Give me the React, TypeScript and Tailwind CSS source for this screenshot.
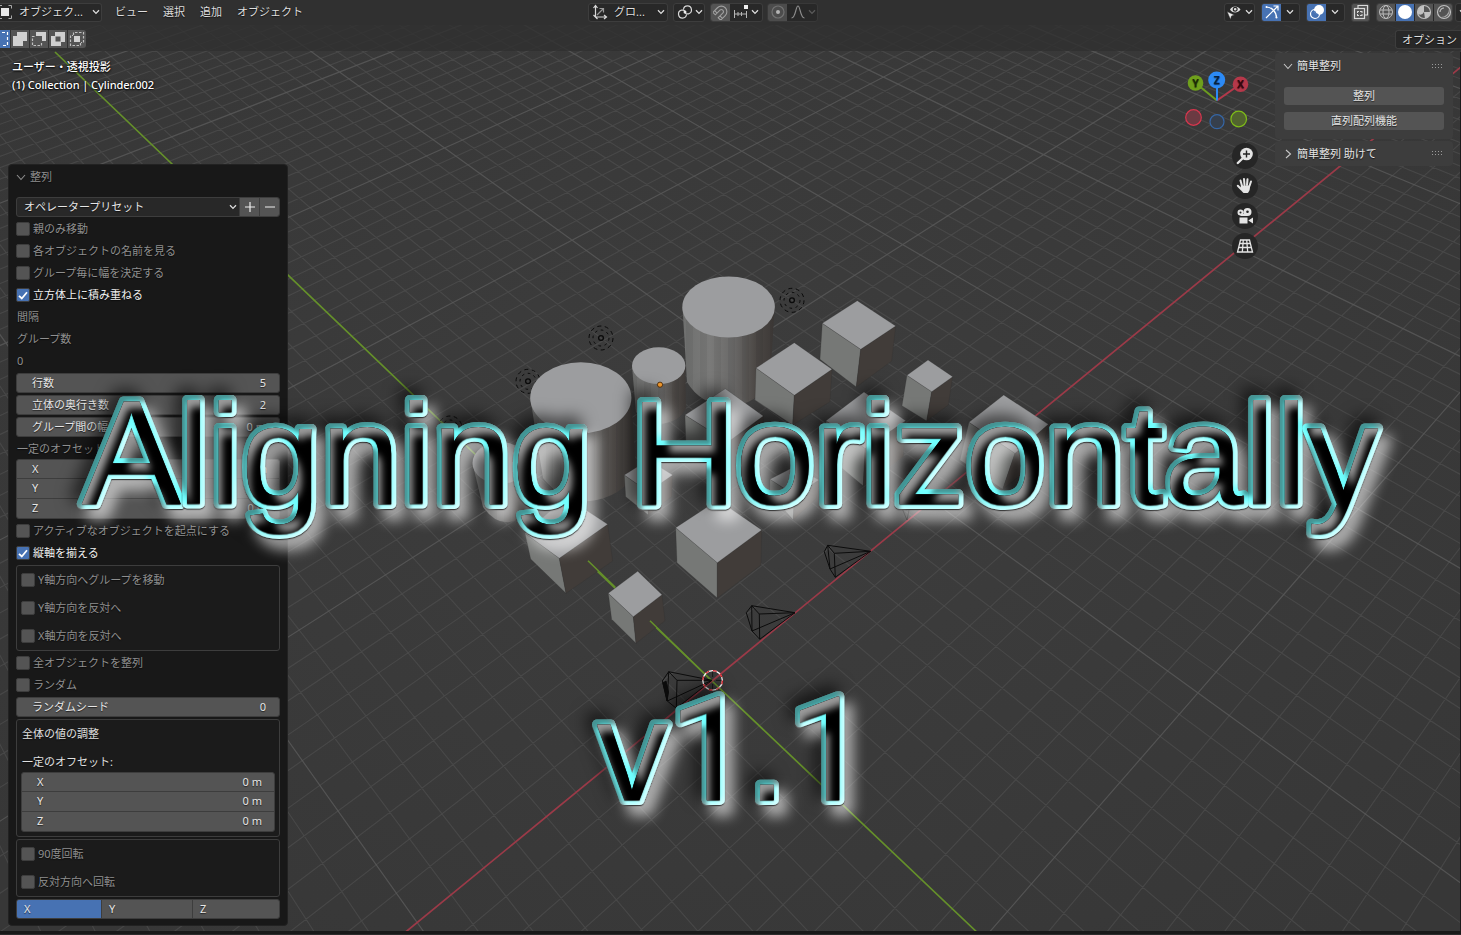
import type { ReactNode } from "react";

/* ---------- viewport projection ---------- */
const project = (x: number, y: number): [number, number] => {
  const w = 1 + 0.0145 * x + 0.0157 * y;
  return [(712 + 35.525 * x - 11.634 * y) / w, (681 - 10.782 * x - 11.139 * y) / w];
};

const seg = (a: [number, number], b: [number, number]) =>
  `M${a[0].toFixed(1)} ${a[1].toFixed(1)}L${b[0].toFixed(1)} ${b[1].toFixed(1)}`;

const alongY = (i: number) => {
  const k = (w: number) => (w - 1 - 0.0145 * i) / 0.0157;
  return seg(project(i, k(0.7)), project(i, k(2.3)));
};
const alongX = (j: number) => {
  const k = (w: number) => (w - 1 - 0.0157 * j) / 0.0145;
  return seg(project(k(0.7), j), project(k(2.3), j));
};

let minor = "";
let major = "";
for (let i = -80; i <= 140; i++) {
  if (i === 0) continue;
  if (i % 10 === 0) major += alongY(i) + alongX(i);
  else minor += alongY(i) + alongX(i);
}

const TOP = "#9c9d9f";
const LEFT = "#767876";
const RIGHT = "#413c39";

/* top, right, front, left, then lower left, lower front, lower right */
const cubes: number[][] = [
  [857.3, 300.7, 895.7, 326, 860.7, 349.3, 822.3, 323.3, 820, 359.3, 856.3, 387, 891.7, 361],
  [928, 360, 952.7, 376.7, 931.7, 391.7, 907, 375.3, 902, 405.7, 926.7, 421, 948.3, 405],
  [794.3, 342.7, 832, 369.3, 794.3, 395.3, 756, 368, 755, 400, 792.7, 425, 830, 401.7],
  [1003.7, 395, 1048.3, 424.3, 1015, 453.3, 969, 422.3, 960, 460, 1002.7, 489.3, 1040, 460],
  [864, 392, 905.7, 420.7, 865, 448.3, 826, 420.7, 828.3, 456.7, 863.3, 486, 903.3, 456.7],
  [725.3, 388.7, 763.3, 416, 728, 442, 685, 415, 686, 448, 728, 480, 762, 450],
  [794.3, 466.7, 819, 480, 794.3, 495, 770, 479.3, 770, 493.3, 793.3, 520, 816.7, 498.3],
  [648.3, 460, 672.7, 475, 648.3, 491.7, 624.3, 475, 625.7, 496.7, 648.3, 515, 671.7, 496.7],
  [718, 500, 761.7, 530, 717.3, 562.7, 675.7, 527.7, 677, 562.7, 717.3, 598, 761, 565],
  [566, 497, 607.7, 524.3, 559.3, 558.3, 525, 533.3, 530.7, 559, 566, 593.3, 612.7, 561],
  [637.7, 571.3, 662, 594.7, 633.3, 616.7, 608.3, 593.3, 611.7, 619.3, 636, 643.3, 665, 620.7],
];

const pts = (c: number[], idx: number[]) => idx.map((i) => `${c[i * 2]},${c[i * 2 + 1]}`).join(" ");

function Cube({ c }: { c: number[] }) {
  return (
    <g stroke="#2c2c2c" strokeOpacity=".35" strokeWidth=".6">
      <polygon points={pts(c, [3, 2, 5, 4])} fill={LEFT} />
      <polygon points={pts(c, [2, 1, 6, 5])} fill={RIGHT} />
      <polygon points={pts(c, [0, 1, 2, 3])} fill={TOP} />
    </g>
  );
}

function PointLight({ x, y }: { x: number; y: number }) {
  return (
    <g fill="none" stroke="#0a0a0a">
      <circle cx={x} cy={y} r="2.4" strokeWidth="1.3" />
      <circle cx={x} cy={y} r="8" strokeWidth="1" strokeDasharray="2.6 3.6" />
      <circle cx={x} cy={y} r="12" strokeWidth="1" strokeDasharray="4 3.5" />
    </g>
  );
}

function Scene() {
  return (
    <svg className="absolute inset-0" width="1461" height="935" viewBox="0 0 1461 935">
      <defs>
        <radialGradient id="bg" cx="50%" cy="50%" r="65%">
          <stop offset="0" stopColor="#3d3d3d" />
          <stop offset="1" stopColor="#373737" />
        </radialGradient>
        <linearGradient id="cyl">
          <stop offset="0" stopColor="#6f706f" />
          <stop offset=".3" stopColor="#7a7a79" />
          <stop offset=".55" stopColor="#6a6968" />
          <stop offset=".8" stopColor="#4b4744" />
          <stop offset="1" stopColor="#3d3937" />
        </linearGradient>
        <pattern id="facet" width="14" height="10" patternUnits="userSpaceOnUse">
          <rect width="7" height="10" fill="#000" fillOpacity=".05" />
        </pattern>
      </defs>
      <rect width="1461" height="935" fill="url(#bg)" />
      <path d={minor} stroke="#505050" strokeOpacity=".62" strokeWidth="1.15" fill="none" />
      <path d={major} stroke="#5a5a5a" strokeOpacity=".8" strokeWidth="1.2" fill="none" />
      <path d="M55 52L712 681L980 935" stroke="#65902a" strokeWidth="1.7" fill="none" />
      <path d="M402 935L712 681L1461 67" stroke="#9b3a48" strokeWidth="1.7" fill="none" />

      <PointLight x={792} y={300.3} />
      <PointLight x={601} y={338} />
      <PointLight x={528} y={381.3} />
      <PointLight x={450} y={428} />

      {[
        "M682.5 307L687 382Q700 404 728 407Q758 404 770 382L774.7 307Z",
        "M632 366L636 412Q645 424 660 424Q680 422 686 408L685.3 366Z",
        "M530.3 398L543 478Q560 501 590 501Q622 497 636 472L631.3 398Z",
        "M472.7 464L483 507Q495 524 510 522Q528 518 531 500L527 464Z",
      ].map((d) => (
        <g key={d}>
          <path d={d} fill="url(#cyl)" />
          <path d={d} fill="url(#facet)" />
        </g>
      ))}
      <g fill={TOP}>
        <ellipse cx="728.6" cy="307" rx="46.3" ry="30.6" />
        <ellipse cx="658.7" cy="365.7" rx="26.7" ry="18.4" />
        <ellipse cx="580.8" cy="397.7" rx="50.6" ry="35.4" />
        <ellipse cx="500" cy="463" rx="27.5" ry="21" />
      </g>
      {cubes.map((c) => (
        <Cube key={c[0]} c={c} />
      ))}
      <path d="M588 560.7L615.3 587.3M650 620.7L712 681" stroke="#65902a" strokeWidth="1.6" />

      <g fill="none" stroke="#0c0c0c" strokeWidth="1" strokeLinejoin="round">
        <path d="M827.7 545.3L870.7 551.3L834.3 553.3ZM834.3 553.3L835.3 577.3L870.7 551.3L830 569L827.7 545.3M830 569L835.3 577.3M827.7 545.3L824.3 551.7L830 569" />
        <path d="M751.7 605.7L795 612.7L759.3 614ZM759.3 614L759.7 639.3L795 612.7L752 631L751.7 605.7M752 631L759.7 639.3M751.7 605.7L746.3 612.7L752 631" />
        <path d="M668.7 671.7L712 680.3L677 680.3ZM677 680.3L676.3 708.3L712 680.3L667.3 701L668.7 671.7M667.3 701L676.3 708.3" />
        <path d="M668.7 671.7L662.3 681L667.3 701" />
        <path d="M663 683L666 681L668.5 692L667 701Z" fill="#0c0c0c" />
        <path d="M902 508L904 513L907 520L909 510" strokeWidth=".7" />
      </g>

      <circle cx="660" cy="384.7" r="2.6" fill="#f29a2e" stroke="#3a1d04" strokeWidth=".8" />
      <path d="M712.6 671V677M712.6 684V690M703 680.4H709M716 680.4H722" stroke="#111" strokeWidth="1" opacity=".8" />
      <circle cx="712.6" cy="680.4" r="9.8" fill="none" stroke="#fff" strokeWidth="1.3" />
      <circle cx="712.6" cy="680.4" r="9.8" fill="none" stroke="#e0202a" strokeWidth="1.3" strokeDasharray="3.85 3.85" />
      <path d="M1460.500 52V935" stroke="#1c1c1c" strokeWidth="1" />
    </svg>
  );
}

function TitleCard() {
  return (
    <svg className="pointer-events-none absolute inset-0" width="1461" height="935" viewBox="0 0 1461 935">
      <defs>
        <filter
          id="bevel"
          filterUnits="userSpaceOnUse"
          x="0"
          y="340"
          width="1461"
          height="540"
          colorInterpolationFilters="sRGB"
        >
          <feColorMatrix in="SourceGraphic" result="face" values="0 0 0 0 0  0 0 0 0 0  0 0 0 0 0  0 0 -1 1 0" />
          <feFlood floodColor="#000" floodOpacity=".62" result="k" />
          <feFlood floodColor="#fff" floodOpacity=".58" result="w" />
          <feFlood floodColor="#000" floodOpacity=".42" result="k2" />
          <feFlood floodColor="#fff" floodOpacity=".75" result="w2" />
          <feFlood floodColor="#fff" floodOpacity=".6" result="w3" />

          <feOffset in="SourceAlpha" dx="-6" dy="-7" />
          <feGaussianBlur stdDeviation="8" result="b1" />
          <feComposite in="k" in2="b1" operator="in" result="shade" />

          <feOffset in="SourceAlpha" dx="9" dy="11" />
          <feGaussianBlur stdDeviation="6.5" result="b2" />
          <feComposite in="w" in2="b2" operator="in" result="glow" />

          <feOffset in="SourceAlpha" dx="4.5" dy="4.5" />
          <feGaussianBlur stdDeviation="2" result="b3" />
          <feComposite in="SourceAlpha" in2="b3" operator="out" result="m3" />
          <feComposite in="k2" in2="m3" operator="in" result="rimDark" />

          <feOffset in="SourceAlpha" dx="-4" dy="-4" />
          <feGaussianBlur stdDeviation="3.5" result="b4" />
          <feComposite in="SourceAlpha" in2="b4" operator="out" result="m4" />
          <feComposite in="w2" in2="m4" operator="in" result="rimLight" />

          <feOffset in="SourceAlpha" dx="8" dy="12" />
          <feGaussianBlur stdDeviation="3.5" result="b5" />
          <feComposite in="face" in2="b5" operator="out" result="m5" />
          <feComposite in="w3" in2="m5" operator="in" result="sheen" />

          <feMerge>
            <feMergeNode in="shade" />
            <feMergeNode in="glow" />
            <feMergeNode in="SourceGraphic" />
            <feMergeNode in="rimLight" />
            <feMergeNode in="rimDark" />
            <feMergeNode in="face" />
            <feMergeNode in="sheen" />
          </feMerge>
        </filter>
      </defs>
      <g
        filter="url(#bevel)"
        fill="#000"
        stroke="#70ffff"
        strokeWidth="10"
        strokeLinejoin="round"
        paintOrder="stroke"
        fontFamily="'Liberation Sans', Arial, sans-serif"
        fontSize="143.4"
      >
        <text y="503.700">
          <tspan x="81.500" fontSize="149.300">A</tspan>
          <tspan x="177.500" letterSpacing="-.1">ligning </tspan>
          <tspan x="630" fontSize="149.300">H</tspan>
          <tspan x="735" letterSpacing="-.2">orizontally</tspan>
        </text>
        <text y="799.500">
          <tspan x="596.500">v</tspan>
          <tspan x="668.500" fontFamily="Roboto, sans-serif" fontSize="144">1</tspan>
          <tspan x="747">.</tspan>
          <tspan x="788" fontFamily="Roboto, sans-serif" fontSize="144">1</tspan>
        </text>
      </g>
    </svg>
  );
}

/* ---------- small controls ---------- */
function Chevron({ className = "", dim = false }: { className?: string; dim?: boolean }) {
  return (
    <svg className={`shrink-0 ${className}`} width="8" height="6" viewBox="0 0 8 6" fill="none" stroke={dim ? "#5a5a5a" : "#dcdcdc"} strokeWidth="1.3">
      <path d="M1 1.2L4 4.4L7 1.2" />
    </svg>
  );
}

function Box({ className = "", children }: { className?: string; children?: ReactNode }) {
  return (
    <div className={`flex h-[19px] shrink-0 items-center overflow-hidden rounded-[3px] border border-[#3d3d3d] bg-[#282828] ${className}`}>
      {children}
    </div>
  );
}

function Icon({ w = 16, h = 16, className = "", children }: { w?: number; h?: number; className?: string; children: ReactNode }) {
  return (
    <svg className={`shrink-0 ${className}`} width={w} height={h} viewBox={`0 0 ${w} ${h}`} fill="none" stroke="#d8d8d8" strokeWidth="1.2">
      {children}
    </svg>
  );
}

function Header() {
  return (
    <div className="flex h-[25px] items-center bg-[#303030] pb-px">
      <Box className="w-[102px] rounded-l-none border-l-0">
        <Icon w={12}>
          <rect x="1" y="4" width="8" height="8" fill="#e8e8e8" stroke="none" />
          <path d="M8.5 1.5H11.5V4.5M11.5 11.5V14.5H8.5M0 1.5H2M0 14.5H2" stroke="#aaa" strokeWidth="1" />
        </Icon>
        <span className="ml-[7px] w-[70px] shrink-0">オブジェク...</span>
        <Chevron className="ml-[3px]" />
      </Box>
      <span className="ml-[13px] w-[48px] shrink-0">ビュー</span>
      <span className="w-[37px] shrink-0">選択</span>
      <span className="w-[37px] shrink-0">追加</span>
      <span className="w-[70px] shrink-0">オブジェクト</span>

      <Box className="ml-[281px] w-[80px]">
        <Icon className="ml-[3px]">
          <path d="M3.5 2V13H14M1.5 4L3.5 1.5L5.5 4M12 11L14.5 13L12 15M1.5 11L5.5 15" />
          <path d="M5 11L11 5M7.5 4.5H11.5V8.5" stroke="#999" />
        </Icon>
        <span className="ml-[6px] w-[40px] shrink-0">グロ...</span>
        <Chevron className="ml-[3px]" />
      </Box>
      <Box className="ml-[5px] w-[32px]">
        <Icon className="ml-[3px]">
          <path d="M6.500 5.500A4 4 0 1 1 11.500 9.800Q9 10.500 7.500 8.500M9.500 10.500A4 4 0 1 1 4.500 6.200Q7 5.500 8.500 7.500" />
          <circle cx="8" cy="8" r="1.5" fill="#eee" stroke="none" />
        </Icon>
        <Chevron className="ml-[2px]" />
      </Box>
      <Box className="ml-[5px] w-[53px]">
        <div className="flex h-full w-[19px] shrink-0 items-center justify-center bg-[#545454]">
          <Icon>
            <g transform="rotate(45 8 8)" stroke="#a0a0a0" strokeWidth="1.1">
              <path d="M2.5 14V7.5A5.5 5.5 0 0 1 13.500 7.5V14H10V7.5A2 2 0 0 0 6 7.500V14ZM2.500 11.5H6M10 11.500H13.500" />
            </g>
          </Icon>
        </div>
        <Icon className="ml-[3px]">
          <path d="M1.500 6V14M1 10H14M5 8V12M8.500 8V12M13.500 7V14" stroke="#b5b5b5" strokeWidth="1" />
          <rect x="11" y="1" width="4" height="4" fill="#eee" stroke="none" />
        </Icon>
        <Chevron className="ml-[2px]" />
      </Box>
      <Box className="ml-[4px] w-[51px] border-[#383838] bg-[#2c2c2c]">
        <div className="flex h-full w-[19px] shrink-0 items-center justify-center bg-[#4c4c4c]">
          <Icon>
            <circle cx="8" cy="8" r="6" stroke="#727272" />
            <circle cx="8" cy="8" r="2" fill="#b5b5b5" stroke="none" />
          </Icon>
        </div>
        <Icon className="ml-[3px]">
          <path d="M1.500 14C6 14 5.500 2 8 2S10 14 14.500 14" stroke="#8c8c8c" />
        </Icon>
        <Chevron className="ml-[2px]" dim />
      </Box>

      <Box className="ml-[406px] w-[31px]">
        <Icon className="ml-px">
          <path d="M4 5.500C6 1.500 12 1.500 14.500 5.500C12 9.500 6 9.500 4 5.500Z" fill="#ddd" stroke="none" />
          <circle cx="9.200" cy="5.300" r="1.900" fill="#ddd" stroke="#282828" />
          <path d="M1 7.500L8.500 11L5.500 12L4.500 15.500Z" fill="#eee" stroke="#282828" strokeWidth=".5" />
        </Icon>
        <Chevron className="ml-[3px]" />
      </Box>
      <Box className="ml-[6px] w-[39px]">
        <div className="flex h-full w-[19px] shrink-0 items-center justify-center bg-[#4772b3]">
          <Icon>
            <path d="M2 3C8 3 12.500 8 12.500 14M2 14L13.500 2.500M9.500 2H14V6.500" stroke="#fff" />
            <circle cx="2.500" cy="3" r="1" fill="#fff" stroke="none" />
            <circle cx="12.500" cy="13.500" r="1" fill="#fff" stroke="none" />
          </Icon>
        </div>
        <Chevron className="ml-[5px]" />
      </Box>
      <Box className="ml-[6px] w-[39px]">
        <div className="flex h-full w-[19px] shrink-0 items-center justify-center bg-[#4772b3]">
          <Icon>
            <circle cx="10" cy="6" r="5" fill="#fff" stroke="none" />
            <circle cx="6" cy="10" r="4.500" stroke="#fff" />
            <path d="M5.500 7A5 5 0 0 0 9.500 10.800" stroke="#4772b3" />
          </Icon>
        </div>
        <Chevron className="ml-[5px]" />
      </Box>
      <Box className="ml-[6px] w-[19px] justify-center bg-[#545454]">
        <Icon>
          <path d="M5 4V1.500H14.500V11H12" />
          <rect x="1.500" y="4.500" width="10" height="10" />
          <path d="M4 7.500H9M4 11.500H9M4.500 7V12M9 7V12" strokeDasharray="2 1" strokeWidth="1" />
        </Icon>
      </Box>
      <Box className="ml-[6px] w-[77px] gap-px bg-[#3d3d3d]">
        <div className="flex h-full w-[18px] shrink-0 items-center justify-center bg-[#545454]">
          <Icon>
            <circle cx="8" cy="8" r="6.500" stroke="#bdbdbd" strokeWidth="1" />
            <ellipse cx="8" cy="8" rx="3" ry="6.500" stroke="#bdbdbd" strokeWidth="1" />
            <path d="M2 6H14M2 10H14" stroke="#bdbdbd" strokeWidth="1" />
          </Icon>
        </div>
        <div className="flex h-full w-[18px] shrink-0 items-center justify-center bg-[#4772b3]">
          <Icon>
            <circle cx="8" cy="8" r="7" fill="#fff" stroke="none" />
          </Icon>
        </div>
        <div className="flex h-full w-[18px] shrink-0 items-center justify-center bg-[#545454]">
          <Icon>
            <circle cx="8" cy="8" r="6.500" stroke="#c0c0c0" />
            <path d="M8 8V1.500A6.500 6.500 0 0 0 2 10Q6 12 8 8ZM8 8H14.500A6.500 6.500 0 0 1 9 14.500Z" fill="#c0c0c0" stroke="none" />
          </Icon>
        </div>
        <div className="flex h-full w-[19px] shrink-0 items-center justify-center bg-[#545454]">
          <Icon>
            <circle cx="8" cy="8" r="6.500" stroke="#c0c0c0" />
            <path d="M4 8A4 4 0 0 1 8 4" stroke="#c0c0c0" />
            <path d="M13 4.500A6.500 6.500 0 0 1 4.500 13A8 8 0 0 0 13 4.500Z" fill="#a8a8a8" stroke="none" />
          </Icon>
        </div>
      </Box>
      <Box className="ml-[2px] w-[12px] rounded-r-none pl-[3px]">
        <Chevron />
      </Box>
    </div>
  );
}

function SelectModes() {
  const cell = "flex h-[18px] w-[18px] items-center justify-center bg-[#545454]";
  return (
    <div className="flex gap-px overflow-hidden rounded-r-[3px]">
      <div className="h-[18px] w-[10px] bg-[#4772b3]">
        <Icon w={10} h={18}>
          <path d="M2 2.500H7.500V15.500H2" stroke="#fff" strokeDasharray="3 2" />
        </Icon>
      </div>
      <div className={cell}>
        <Icon>
          <path d="M5 1H15V10H11V15H1V5H5Z" fill="#d0d0d0" stroke="none" />
        </Icon>
      </div>
      <div className={cell}>
        <Icon>
          <path d="M5 1H15V10H11V5H5Z" fill="#d0d0d0" stroke="none" />
          <path d="M3.500 5.500H1.500V14.500H10.500V12" stroke="#c0c0c0" strokeDasharray="2.500 1.500" />
        </Icon>
      </div>
      <div className={cell}>
        <Icon>
          <path fillRule="evenodd" d="M5 1H15V11H11V15H1V5H5ZM5.500 5.500V10.500H10.500V5.500Z" fill="#d0d0d0" stroke="none" />
        </Icon>
      </div>
      <div className={cell}>
        <Icon>
          <rect x="5" y="5" width="6" height="6" fill="#d0d0d0" stroke="none" />
          <path d="M4.500 4V1.500H14.500V11.500H12M11.500 12V14.500H1.500V4.500H4" stroke="#c0c0c0" strokeDasharray="2.500 1.500" />
        </Icon>
      </div>
    </div>
  );
}

function Check({ label, on = false }: { label: string; on?: boolean }) {
  return (
    <div className={`flex h-[22px] items-center ${on ? "text-[#f0f0f0]" : "text-[#8f8f8f]"}`}>
      <div className={`flex h-[14px] w-[14px] items-center justify-center rounded-[2px] border border-[#3d3d3d] ${on ? "bg-[#4772b3]" : "bg-[#545454]"}`}>
        {on && (
          <svg width="10" height="9" viewBox="0 0 10 9" fill="none" stroke="#fff" strokeWidth="1.8">
            <path d="M1 4.800L3.800 7.500L9 1.200" />
          </svg>
        )}
      </div>
      <span className="ml-[3px]">{label}</span>
    </div>
  );
}

function Label({ children, className = "" }: { children: ReactNode; className?: string }) {
  return <div className={`flex h-[22px] items-center pl-px ${className}`}>{children}</div>;
}

function Field({ label, value }: { label: string; value: string }) {
  return (
    <div className="flex h-[22px] items-center">
      <div className="flex h-[20px] w-full items-center justify-between rounded-[3px] border border-[#3d3d3d] bg-[#545454] pr-[13px] pl-[15px] text-[#e6e6e6]">
        <span>{label}</span>
        <span>{value}</span>
      </div>
    </div>
  );
}

function Vector() {
  return (
    <div className="flex h-[60px] flex-col overflow-hidden rounded-[3px] border border-[#3d3d3d] bg-[#545454] pb-px text-[#e6e6e6]">
      {["X", "Y", "Z"].map((axis) => (
        <div key={axis} className="flex flex-1 items-center justify-between border-[#3d3d3d] pr-[12px] pl-[15px] not-last:border-b">
          <span>{axis}</span>
          <span>0 m</span>
        </div>
      ))}
    </div>
  );
}

function OperatorPanel() {
  return (
    <div className="ml-2 h-[762px] w-[280px] rounded-[4px] border border-[#222] bg-[#181818] px-[7px] pt-px text-[#8f8f8f]">
      <div className="flex h-[22px] items-center">
        <svg width="10" height="7" viewBox="0 0 10 7" fill="none" stroke="#8f8f8f" strokeWidth="1.100">
          <path d="M1 1L5 5.500L9 1" />
        </svg>
        <span className="ml-1">整列</span>
      </div>
      <div className="mt-[8px] flex h-[22px] items-center">
        <div className="flex h-[20px] w-full items-center overflow-hidden rounded-[3px] border border-[#3d3d3d] bg-[#282828] text-[#e6e6e6]">
          <span className="ml-[7px] flex-1">オペレータープリセット</span>
          <Chevron className="mr-px" />
          <div className="ml-px flex h-full w-[20px] items-center justify-center border-l border-[#3d3d3d] bg-[#545454]">
            <svg width="10" height="10" stroke="#eee" strokeWidth="1.200">
              <path d="M0 5H10M5 0V10" />
            </svg>
          </div>
          <div className="flex h-full w-[20px] items-center justify-center border-l border-[#3d3d3d] bg-[#545454]">
            <svg width="10" height="10" stroke="#eee" strokeWidth="1.200">
              <path d="M0 5H10" />
            </svg>
          </div>
        </div>
      </div>
      <Check label="親のみ移動" />
      <Check label="各オブジェクトの名前を見る" />
      <Check label="グループ毎に幅を決定する" />
      <Check label="立方体上に積み重ねる" on />
      <Label>間隔</Label>
      <Label>グループ数</Label>
      <Label>0</Label>
      <Field label="行数" value="5" />
      <Field label="立体の奥行き数" value="2" />
      <Field label="グループ間の幅" value="0 m" />
      <Label className="-mb-px">一定のオフセット:</Label>
      <Vector />
      <div className="mt-px">
        <Check label="アクティブなオブジェクトを起点にする" />
        <Check label="縦軸を揃える" on />
      </div>
      <div className="mt-px flex h-[86px] flex-col gap-[6px] rounded-[3px] border border-[#3d3d3d] bg-[#1b1b1b] px-1 pt-[3px]">
        <Check label="Y軸方向へグループを移動" />
        <Check label="Y軸方向を反対へ" />
        <Check label="X軸方向を反対へ" />
      </div>
      <div className="mt-px">
        <Check label="全オブジェクトを整列" />
        <Check label="ランダム" />
      </div>
      <Field label="ランダムシード" value="0" />
      <div className="mt-px h-[118px] rounded-[3px] border border-[#3d3d3d] bg-[#1b1b1b] px-1 pt-[3px] text-[#e0e0e0]">
        <Label className="mb-[6px]">全体の値の調整</Label>
        <Label className="-mb-px">一定のオフセット:</Label>
        <Vector />
      </div>
      <div className="mt-[2px] flex h-[58px] flex-col gap-[6px] rounded-[3px] border border-[#3d3d3d] bg-[#1b1b1b] px-1 pt-[3px]">
        <Check label="90度回転" />
        <Check label="反対方向へ回転" />
      </div>
      <div className="mt-[2px] flex h-[20px] overflow-hidden rounded-[3px] border border-[#3d3d3d] bg-[#545454] text-[#e6e6e6]">
        <div className="flex w-[84px] items-center bg-[#4772b3] pl-[7px]">X</div>
        <div className="flex w-[91px] items-center border-l border-[#3d3d3d] pl-[7px]">Y</div>
        <div className="flex flex-1 items-center border-l border-[#3d3d3d] pl-[7px]">Z</div>
      </div>
    </div>
  );
}

function Grip() {
  return (
    <svg className="mr-[2px]" width="11" height="5" fill="#9a9a9a">
      {[0, 3, 6, 9].map((x) => (
        <g key={x}>
          <rect x={x} y="0" width="1" height="1" />
          <rect x={x} y="3" width="1" height="1" />
        </g>
      ))}
    </svg>
  );
}

function SidePanel() {
  const btn = "mx-px flex h-[18px] items-center justify-center rounded-[3px] bg-[#545454]";
  return (
    <div className="flex w-[178px] flex-col gap-[2px] text-[#e6e6e6]">
      <div className="h-[86px] rounded-[4px] bg-[#3d3d3d] px-[8px]">
        <div className="flex h-[26px] items-center">
          <svg width="10" height="7" viewBox="0 0 10 7" fill="none" stroke="#c8c8c8" strokeWidth="1.100">
            <path d="M1 1L5 5.500L9 1" />
          </svg>
          <span className="ml-[4px] flex-1">簡単整列</span>
          <Grip />
        </div>
        <div className={`${btn} mt-[8px]`}>整列</div>
        <div className={`${btn} mt-[7px]`}>直列配列機能</div>
      </div>
      <div className="flex h-[25px] items-center rounded-[4px] bg-[#3d3d3d] px-[8px]">
        <svg width="10" height="10" viewBox="0 0 10 10" fill="none" stroke="#c8c8c8" strokeWidth="1.100">
          <path d="M3 1L7.500 5L3 9" />
        </svg>
        <span className="ml-[4px] flex-1">簡単整列 助けて</span>
        <Grip />
      </div>
    </div>
  );
}

function Gizmo() {
  return (
    <svg width="72" height="64" viewBox="1180 66 72 64" fontFamily="'Noto Sans', sans-serif" fontSize="10.500" fontWeight="700" textAnchor="middle">
      <path d="M1217 100.500L1195.500 83" stroke="#6c9c1f" strokeWidth="2" />
      <path d="M1217 100.500L1240.500 84" stroke="#b5384a" strokeWidth="2" />
      <path d="M1217 100.500V80" stroke="#2c8af5" strokeWidth="2" />
      <circle cx="1193.500" cy="117.500" r="7.800" fill="#6b3a42" stroke="#d8364e" strokeWidth="1.200" />
      <circle cx="1217" cy="121.700" r="7" fill="#363f4c" stroke="#3566a6" strokeWidth="1.200" />
      <circle cx="1238.700" cy="119" r="7.800" fill="#51632f" stroke="#7fbd18" strokeWidth="1.200" />
      <circle cx="1195.500" cy="83" r="7.800" fill="#6fa01c" />
      <circle cx="1240.500" cy="84.300" r="7.800" fill="#b5384a" />
      <circle cx="1216.700" cy="80" r="8.500" fill="#2c8af5" />
      <text x="1195.500" y="87" fill="#1c2b05">Y</text>
      <text x="1240.500" y="88.300" fill="#35060e">X</text>
      <text x="1216.700" y="84" fill="#06203f">Z</text>
    </svg>
  );
}

function NavButtons() {
  const btn = "flex h-[26px] w-[26px] items-center justify-center rounded-full bg-[#262626]";
  return (
    <div className="flex flex-col gap-1">
      <div className={btn}>
        <svg width="18" height="18" viewBox="0 0 18 18">
          <circle cx="10.500" cy="7" r="6.300" fill="#e4e4e4" />
          <path d="M6.500 11.500L1.800 16" stroke="#e4e4e4" strokeWidth="2.400" strokeLinecap="round" />
          <path d="M10.500 3.500V10.500M7 7H14" stroke="#222" strokeWidth="1.400" />
        </svg>
      </div>
      <div className={btn}>
        <svg width="18" height="18" viewBox="0 0 18 18" fill="none" stroke="#e4e4e4" strokeWidth="2" strokeLinecap="round">
          <path d="M6 9L4.500 3.500M8.500 8L8 2M11 8L11.500 2.300M13.500 9L15 4.500M5.500 12.500L1.800 8.800" />
          <path d="M5 8.500L14 8.500C14.300 12 13 15.500 11.500 16H7.500C6 15 5 13 4.500 11Z" fill="#e4e4e4" stroke="none" />
        </svg>
      </div>
      <div className={btn}>
        <svg width="18" height="18" viewBox="0 0 18 18" fill="#e4e4e4">
          <path fillRule="evenodd" d="M4.500 2.500a3 3 0 1 0 0 6a3 3 0 1 0 0-6ZM4.500 4.500a1 1 0 1 1 0 2a1 1 0 1 1 0-2ZM11.500 1a4 4 0 1 0 0 8a4 4 0 1 0 0-8ZM11.500 3.500a1.300 1.300 0 1 1 0 2.600a1.300 1.300 0 1 1 0-2.600Z" />
          <path d="M4.500 7H11V9H4.500ZM3.500 10.500H11.500V16.500H3.500ZM12.300 13.500L17 10.500V16.500Z" />
        </svg>
      </div>
      <div className={btn}>
        <svg width="18" height="18" viewBox="0 0 18 18" fill="none" stroke="#e4e4e4" strokeWidth="1.300">
          <path d="M4.500 3H13.500L16.500 15H1.500ZM3.800 6.500H14.200M2.800 10.500H15.200M7.300 3L6.300 15M10.700 3L11.700 15" />
        </svg>
      </div>
    </div>
  );
}

export default function App() {
  return (
    <div className="relative h-[935px] w-[1461px] overflow-hidden bg-[#3a3a3a] font-['Noto_Sans','Noto_Sans_CJK_JP',sans-serif] text-[11px] leading-[16px] whitespace-nowrap text-[#dedede] [text-shadow:0_1px_1px_rgba(0,0,0,0.6)]">
      <Scene />
      <div className="relative flex h-full flex-col">
        <Header />
        <div className="flex h-[26px] items-start justify-between bg-[#303030]/80 pt-[5px]">
          <SelectModes />
          <Box className="w-[66px] rounded-r-none border-r-0 pl-[6px]">オプション</Box>
        </div>
        <div className="flex min-h-0 flex-1 justify-between">
          <div>
            <div className="h-[113px] pt-2 pl-3 font-medium text-white [text-shadow:0_0_2px_#000,0_1px_2px_#000]">
              <div className="h-[18px]">ユーザー・透視投影</div>
              <div className="h-[18px] tracking-[-0.05px]">(1) Collection | Cylinder.002</div>
            </div>
            <OperatorPanel />
          </div>
          <div className="flex pr-2">
            <div className="mr-[23px] flex w-[72px] flex-col items-end pt-[15px]">
              <Gizmo />
              <div className="mt-[13px] -mr-[6px]">
                <NavButtons />
              </div>
            </div>
            <div className="pt-[2px]">
              <SidePanel />
            </div>
          </div>
        </div>
        <div className="h-1 border-b border-[#2b2b2b] bg-[#191919]" />
      </div>
      <TitleCard />
    </div>
  );
}
